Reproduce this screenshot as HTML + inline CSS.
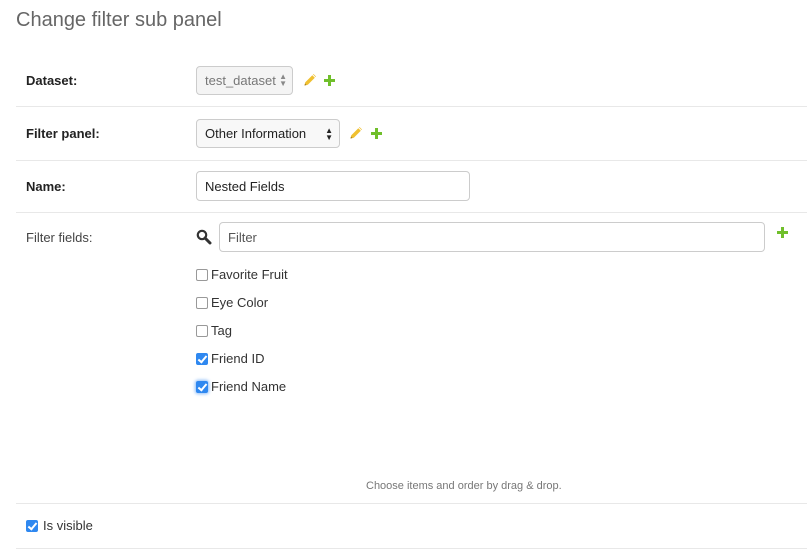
<!DOCTYPE html>
<html><head><meta charset="utf-8"><style>
*{box-sizing:border-box;margin:0;padding:0}
body{width:807px;height:558px;background:#fff;font-family:"Liberation Sans",sans-serif;color:#333;position:relative;overflow:hidden}
.a{position:absolute}
h1{position:absolute;left:16px;top:9px;font-size:20px;font-weight:300;color:#666}
.hr{position:absolute;left:16px;right:0;height:1px;background:#e8e8e8}
.lbl{position:absolute;left:26px;font-size:13px;font-weight:bold;color:#222}
.box{position:absolute;border:1px solid #ccc;border-radius:4px;font-size:13px;color:#222;padding-left:8px;display:flex;align-items:center;background:#fff}
.cb{position:absolute;left:196px;width:12px;height:12px;border:1px solid #999;border-radius:2px;background:#fff}
.cb.on{background:#2f88f0;border-color:#2f88f0}
.cb.on::after{content:"";position:absolute;left:3px;top:0px;width:3px;height:7px;border:solid #fff;border-width:0 2px 2px 0;transform:rotate(40deg)}
.it{position:absolute;left:211px;font-size:13px;color:#333}
</style></head><body>
<h1>Change filter sub panel</h1>

<div class="lbl" style="top:73px">Dataset:</div>
<div class="box" style="left:196px;top:66px;width:97px;height:29px;background:#f4f4f4;color:#777">test_dataset<span class="a" style="right:5px;top:6px;font-size:8px;line-height:7px;color:#888">▲<br>▼</span></div>
<svg class="a" style="left:304px;top:74px" width="12" height="12" viewBox="0 0 12 12"><path d="M0.5 11.5 L1.3 8.2 L8.3 1.2 L10.8 3.7 L3.8 10.7 Z" fill="#f0c030"/><path d="M9 0.5 L11.5 3 L12 2.5 L9.5 0 Z" fill="#f0c030"/><path d="M0.5 11.5 L1 9.5 L2.5 11 Z" fill="#a07820"/></svg>
<svg class="a" style="left:324px;top:75px" width="11" height="11" viewBox="0 0 11 11"><path d="M4 0H7V4H11V7H7V11H4V7H0V4H4Z" fill="#70bf2b"/></svg>
<div class="hr" style="top:106px"></div>

<div class="lbl" style="top:126px">Filter panel:</div>
<div class="box" style="left:196px;top:119px;width:144px;height:29px;background:#f8f8f8">Other Information<span class="a" style="right:6px;top:7px;font-size:8px;line-height:7px;color:#222">▲<br>▼</span></div>
<svg class="a" style="left:350px;top:127px" width="12" height="12" viewBox="0 0 12 12"><path d="M0.5 11.5 L1.3 8.2 L8.3 1.2 L10.8 3.7 L3.8 10.7 Z" fill="#f0c030"/><path d="M9 0.5 L11.5 3 L12 2.5 L9.5 0 Z" fill="#f0c030"/><path d="M0.5 11.5 L1 9.5 L2.5 11 Z" fill="#a07820"/></svg>
<svg class="a" style="left:371px;top:128px" width="11" height="11" viewBox="0 0 11 11"><path d="M4 0H7V4H11V7H7V11H4V7H0V4H4Z" fill="#70bf2b"/></svg>
<div class="hr" style="top:160px"></div>

<div class="lbl" style="top:179px">Name:</div>
<div class="box" style="left:196px;top:171px;width:274px;height:30px">Nested Fields</div>
<div class="hr" style="top:212px"></div>

<div class="lbl" style="top:230px;font-weight:normal;color:#444">Filter fields:</div>
<svg class="a" style="left:196px;top:229px" width="16" height="16" viewBox="0 0 16 16"><circle cx="6" cy="6" r="4.2" fill="none" stroke="#333" stroke-width="2.2"/><path d="M9 9 L14 14" stroke="#333" stroke-width="3" stroke-linecap="round"/></svg>
<div class="box" style="left:219px;top:222px;width:546px;height:30px;color:#555">Filter</div>
<svg class="a" style="left:777px;top:227px" width="11" height="11" viewBox="0 0 11 11"><path d="M4 0H7V4H11V7H7V11H4V7H0V4H4Z" fill="#70bf2b"/></svg>

<div class="cb" style="top:269px"></div><div class="it" style="top:267px">Favorite Fruit</div>
<div class="cb" style="top:297px"></div><div class="it" style="top:295px">Eye Color</div>
<div class="cb" style="top:325px"></div><div class="it" style="top:323px">Tag</div>
<div class="cb on" style="top:353px"></div><div class="it" style="top:351px">Friend ID</div>
<div class="cb on" style="top:381px;box-shadow:0 0 3px 1px #8cbcf8"></div><div class="it" style="top:379px">Friend Name</div>

<div class="a" style="left:366px;top:480px;font-size:11px;color:#777">Choose items and order by drag &amp; drop.</div>
<div class="hr" style="top:503px"></div>

<div class="cb on" style="left:26px;top:520px"></div>
<div class="a" style="left:43px;top:518px;font-size:13px;color:#333">Is visible</div>
<div class="hr" style="top:548px"></div>
</body></html>
